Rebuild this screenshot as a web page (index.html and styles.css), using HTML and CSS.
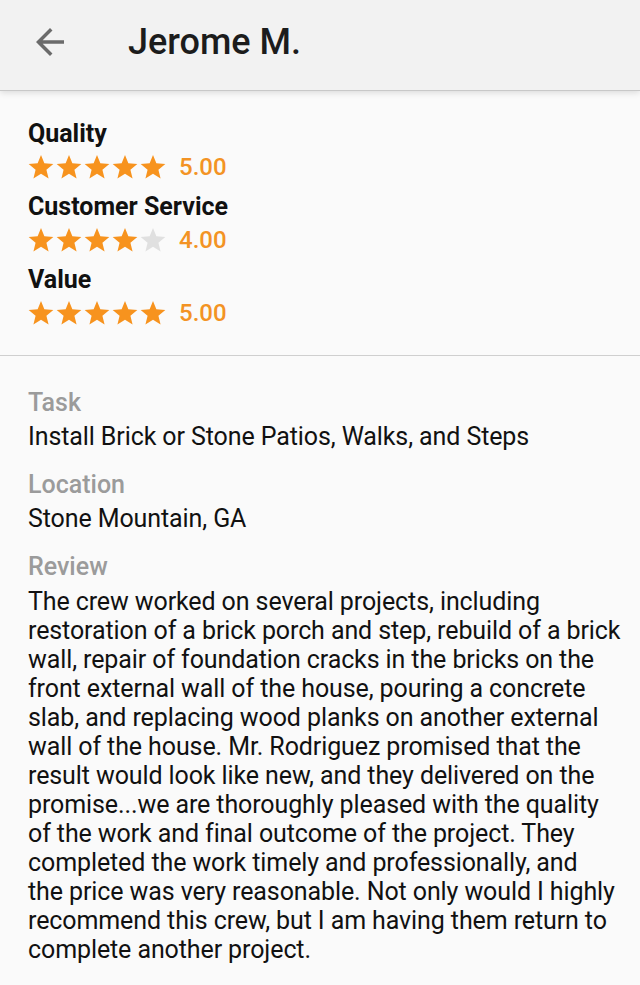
FILE: index.html
```html
<!DOCTYPE html>
<html lang="en">
<head>
  <meta charset="UTF-8">
  <meta name="viewport" content="width=device-width, initial-scale=1.0">
  <title>Jerome M.</title>
  <link rel="stylesheet" href="styles.css">
</head>
<body>

  <div class="toolbar">
    <svg class="back" width="42" height="42" viewBox="0 0 24 24">
      <path d="M20 11H7.83l5.59-5.59L12 4l-8 8 8 8 1.41-1.41L7.83 13H20v-2z" fill="#6b6b6b"/>
    </svg>
    <h1>Jerome M.</h1>
  </div>

  <div class="ratings">
    <div class="rating">
      <div class="rating-name">Quality</div>
      <div class="rating-row">
        <div class="stars">
          <svg viewBox="0 0 24 24"><polygon points="12,1 15.1,8.6 23.4,9.2 17,14.5 19,22.6 12,18.2 5,22.6 7,14.5 0.6,9.2 8.9,8.6"/></svg>
          <svg viewBox="0 0 24 24"><polygon points="12,1 15.1,8.6 23.4,9.2 17,14.5 19,22.6 12,18.2 5,22.6 7,14.5 0.6,9.2 8.9,8.6"/></svg>
          <svg viewBox="0 0 24 24"><polygon points="12,1 15.1,8.6 23.4,9.2 17,14.5 19,22.6 12,18.2 5,22.6 7,14.5 0.6,9.2 8.9,8.6"/></svg>
          <svg viewBox="0 0 24 24"><polygon points="12,1 15.1,8.6 23.4,9.2 17,14.5 19,22.6 12,18.2 5,22.6 7,14.5 0.6,9.2 8.9,8.6"/></svg>
          <svg viewBox="0 0 24 24"><polygon points="12,1 15.1,8.6 23.4,9.2 17,14.5 19,22.6 12,18.2 5,22.6 7,14.5 0.6,9.2 8.9,8.6"/></svg>
        </div>
        <span class="score">5.00</span>
      </div>
    </div>
    <div class="rating">
      <div class="rating-name">Customer Service</div>
      <div class="rating-row">
        <div class="stars">
          <svg viewBox="0 0 24 24"><polygon points="12,1 15.1,8.6 23.4,9.2 17,14.5 19,22.6 12,18.2 5,22.6 7,14.5 0.6,9.2 8.9,8.6"/></svg>
          <svg viewBox="0 0 24 24"><polygon points="12,1 15.1,8.6 23.4,9.2 17,14.5 19,22.6 12,18.2 5,22.6 7,14.5 0.6,9.2 8.9,8.6"/></svg>
          <svg viewBox="0 0 24 24"><polygon points="12,1 15.1,8.6 23.4,9.2 17,14.5 19,22.6 12,18.2 5,22.6 7,14.5 0.6,9.2 8.9,8.6"/></svg>
          <svg viewBox="0 0 24 24"><polygon points="12,1 15.1,8.6 23.4,9.2 17,14.5 19,22.6 12,18.2 5,22.6 7,14.5 0.6,9.2 8.9,8.6"/></svg>
          <svg class="empty" viewBox="0 0 24 24"><polygon points="12,1 15.1,8.6 23.4,9.2 17,14.5 19,22.6 12,18.2 5,22.6 7,14.5 0.6,9.2 8.9,8.6"/></svg>
        </div>
        <span class="score">4.00</span>
      </div>
    </div>
    <div class="rating">
      <div class="rating-name">Value</div>
      <div class="rating-row">
        <div class="stars">
          <svg viewBox="0 0 24 24"><polygon points="12,1 15.1,8.6 23.4,9.2 17,14.5 19,22.6 12,18.2 5,22.6 7,14.5 0.6,9.2 8.9,8.6"/></svg>
          <svg viewBox="0 0 24 24"><polygon points="12,1 15.1,8.6 23.4,9.2 17,14.5 19,22.6 12,18.2 5,22.6 7,14.5 0.6,9.2 8.9,8.6"/></svg>
          <svg viewBox="0 0 24 24"><polygon points="12,1 15.1,8.6 23.4,9.2 17,14.5 19,22.6 12,18.2 5,22.6 7,14.5 0.6,9.2 8.9,8.6"/></svg>
          <svg viewBox="0 0 24 24"><polygon points="12,1 15.1,8.6 23.4,9.2 17,14.5 19,22.6 12,18.2 5,22.6 7,14.5 0.6,9.2 8.9,8.6"/></svg>
          <svg viewBox="0 0 24 24"><polygon points="12,1 15.1,8.6 23.4,9.2 17,14.5 19,22.6 12,18.2 5,22.6 7,14.5 0.6,9.2 8.9,8.6"/></svg>
        </div>
        <span class="score">5.00</span>
      </div>
    </div>
  </div>

  <div class="details">
    <div class="field">
      <div class="field-label">Task</div>
      <div class="field-value">Install Brick or Stone Patios, Walks, and Steps</div>
    </div>
    <div class="field">
      <div class="field-label">Location</div>
      <div class="field-value">Stone Mountain, GA</div>
    </div>
    <div class="field">
      <div class="field-label">Review</div>
      <p class="field-value review">The crew worked on several projects, including restoration of a brick porch and step, rebuild of a brick wall, repair of foundation cracks in the bricks on the front external wall of the house, pouring a concrete slab, and replacing wood planks on another external wall of the house. Mr. Rodriguez promised that the result would look like new, and they delivered on the promise...we are thoroughly pleased with the quality of the work and final outcome of the project. They completed the work timely and professionally, and the&nbsp;price was very reasonable. Not only would I highly recommend this crew, but I am having them return to complete another project.</p>
    </div>
  </div>

</body>
</html>
```

FILE: styles.css
```css
body {
  font-family: 'Roboto', sans-serif;
  background-color: #fafafa;
  color: #111;
  margin: 0;
  padding: 0;
}
.toolbar {
  height: 90px;
  display: flex;
  align-items: center;
  background-color: #f2f2f2;
  box-shadow: 0 1px 0 #c8c8c8, 0 3px 6px rgba(0, 0, 0, 0.12);
  position: relative;
}
.back {
  margin-left: 29px;
  margin-top: -6px;
}
.toolbar h1 {
  margin: -6px 0 0 57px;
  font-size: 36px;
  font-weight: 500;
  color: #1c1c1c;
}
.ratings {
  padding: 28px 28px 26px;
  border-bottom: 1px solid #cfcfcf;
}
.rating-name {
  font-size: 25px;
  font-weight: 700;
  color: #111;
  line-height: 32px;
}
.rating-row {
  display: flex;
  align-items: center;
  height: 33px;
  margin-bottom: 8px;
}
.rating:last-child .rating-row {
  margin-bottom: 0;
}
.stars {
  display: flex;
  gap: 2px;
}
.stars svg {
  width: 26px;
  height: 26px;
  fill: #f7931e;
}
.stars svg.empty {
  fill: #e0e0e0;
}
.score {
  margin-left: 13px;
  font-size: 24px;
  font-weight: 500;
  color: #f39324;
}
.details {
  padding: 30px 15px 20px 28px;
}
.field-label {
  font-size: 25px;
  font-weight: 500;
  color: #9b9b9b;
  line-height: 34px;
}
.field-value {
  font-size: 25px;
  color: #111;
  line-height: 34px;
  letter-spacing: -0.1px;
  margin-bottom: 14px;
}
.review {
  margin: 3px 0 0;
  line-height: 29px;
}
```
